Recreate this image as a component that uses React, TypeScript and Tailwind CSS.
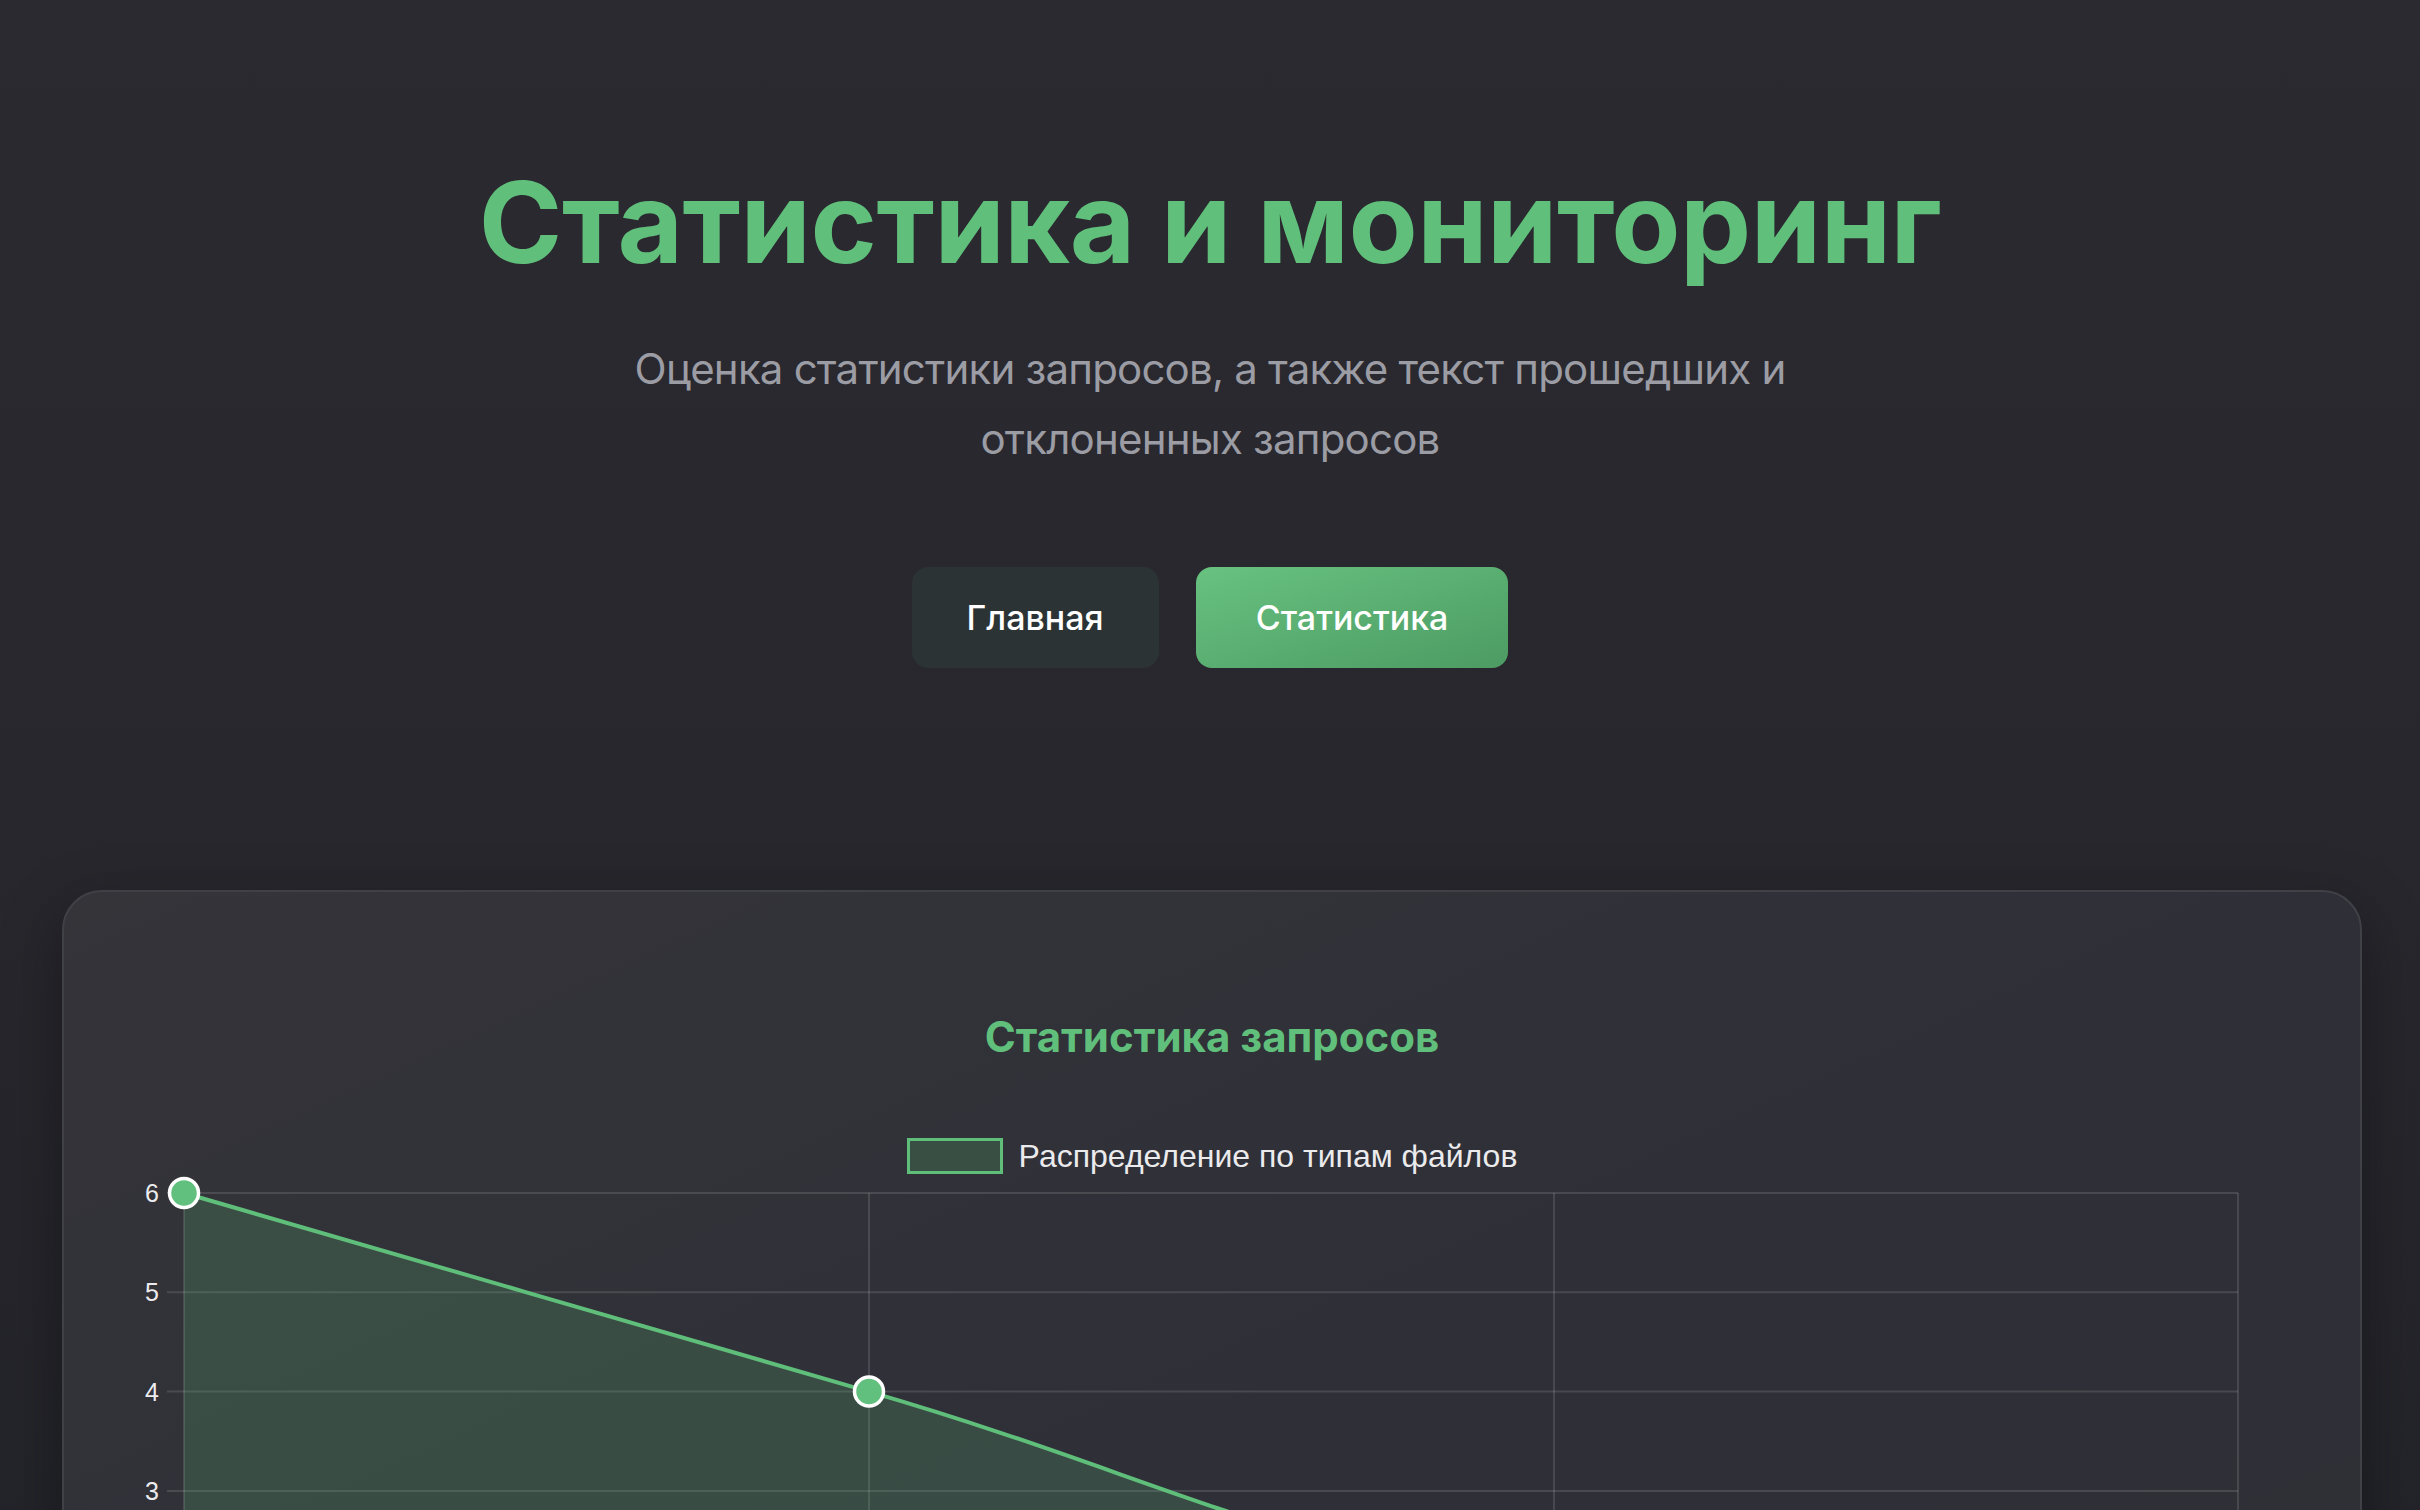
import React from "react";

const OX = 142; // svg left in page coords
const OY = 1164; // svg top in page coords

const px = (x: number) => x - OX;
const py = (y: number) => y - OY;

const xs = [184, 869, 1554, 2238].map(px);
const unit = 99.3;
const y0 = py(1193); // value 6
const yv = (v: number) => y0 + (6 - v) * unit;

const data = [6, 4, 2, 2];
const labels = ["PDF", "DOCX", "TXT", "Другие"];

function buildPath() {
  const pts = data.map((v, i) => ({ x: xs[i], y: yv(v) }));
  const t = 0.4;
  const cps = pts.map((p, i) => {
    const prev = pts[Math.max(i - 1, 0)];
    const next = pts[Math.min(i + 1, pts.length - 1)];
    const d01 = Math.hypot(p.x - prev.x, p.y - prev.y);
    const d12 = Math.hypot(next.x - p.x, next.y - p.y);
    let s01 = d01 / (d01 + d12);
    let s12 = d12 / (d01 + d12);
    if (isNaN(s01)) s01 = 0;
    if (isNaN(s12)) s12 = 0;
    const fa = t * s01;
    const fb = t * s12;
    return {
      prev: { x: p.x - fa * (next.x - prev.x), y: p.y - fa * (next.y - prev.y) },
      next: { x: p.x + fb * (next.x - prev.x), y: p.y + fb * (next.y - prev.y) },
    };
  });
  let d = `M ${pts[0].x} ${pts[0].y}`;
  for (let i = 1; i < pts.length; i++) {
    const c1 = cps[i - 1].next;
    const c2 = cps[i].prev;
    d += ` C ${c1.x} ${c1.y} ${c2.x} ${c2.y} ${pts[i].x} ${pts[i].y}`;
  }
  return { d, pts };
}

function Chart() {
  const { d, pts } = buildPath();
  const bottom = yv(0);
  const area = `${d} L ${pts[pts.length - 1].x} ${bottom} L ${pts[0].x} ${bottom} Z`;
  const grid = "rgba(255,255,255,0.12)";
  const ticks = [6, 5, 4, 3, 2, 1, 0];
  return (
    <svg width={2140} height={700} className="block overflow-visible" style={{ fontFamily: '"Liberation Sans", Arial, sans-serif' }}>
      {ticks.map((v) => (
        <g key={v}>
          <line x1={25} x2={xs[3]} y1={yv(v)} y2={yv(v)} stroke={grid} strokeWidth={2} />
          <text x={17} y={yv(v)} textAnchor="end" dominantBaseline="central" fontSize={25} fill="#ececee">
            {v}
          </text>
        </g>
      ))}
      {xs.map((x, i) => (
        <g key={i}>
          <line x1={x} x2={x} y1={y0} y2={bottom + 16} stroke={grid} strokeWidth={2} />
          <text x={x} y={bottom + 42} textAnchor="middle" fontSize={25} fill="#ececee">
            {labels[i]}
          </text>
        </g>
      ))}
      <path d={area} fill="rgba(95,191,122,0.2)" />
      <path d={d} fill="none" stroke="#5fbf7a" strokeWidth={4} />
      {pts.map((p, i) => (
        <circle key={i} cx={p.x} cy={p.y} r={14.5} fill="#62c07e" stroke="#ffffff" strokeWidth={3.5} />
      ))}
    </svg>
  );
}

export default function App() {
  return (
    <div
      className="min-h-screen w-full bg-gradient-to-b from-[#2a2a30] via-[#26262c] to-[#202126] pb-[120px]"
      style={{ fontFamily: 'Inter, "Noto Sans", sans-serif' }}
    >
      <header className="flex flex-col items-center pt-[153px] text-center">
        <h1 className="text-[113px] leading-[139px] font-bold tracking-[-0.5px] text-[#60bf7b]">
          Статистика и мониторинг
        </h1>
        <p className="mt-[42px] max-w-[1240px] text-[42px] leading-[70px] tracking-[-0.8px] text-[#9b9ca4]">
          Оценка статистики запросов, а также текст прошедших и отклоненных запросов
        </p>
        <nav className="mt-[93px] flex items-center gap-[37px]">
          <button className="h-[101px] rounded-[16px] bg-[#2c3335] px-[55px] text-[34px] font-medium text-white">
            Главная
          </button>
          <button className="h-[101px] rounded-[16px] bg-gradient-to-br from-[#68c280] to-[#4c9b63] px-[60px] text-[34px] font-medium text-white">
            Статистика
          </button>
        </nav>
      </header>

      <section className="mt-[222px] ml-[62px] mr-[58px] rounded-[40px] border-2 border-[#404047] bg-gradient-to-br from-[#343439] via-[#2f2f38] to-[#2f2f35] px-[78px] pt-[121px] pb-[80px] shadow-[0_20px_60px_rgba(0,0,0,0.35)]">
        <h2 className="text-center text-[42px] leading-[48px] font-bold text-[#60bf7b]">Статистика запросов</h2>
        <div className="mt-[77px] flex items-center justify-center gap-[16px]">
          <span className="block h-[36px] w-[96px] border-[3px] border-[#5fbf7a] bg-[#3a4f44]" />
          <span
            className="text-[32px] leading-[36px] text-[#ebebed]"
            style={{ fontFamily: '"Liberation Sans", Arial, sans-serif' }}
          >
            Распределение по типам файлов
          </span>
        </div>
        <div className="-mt-[10px]">
          <Chart />
        </div>
      </section>
    </div>
  );
}
